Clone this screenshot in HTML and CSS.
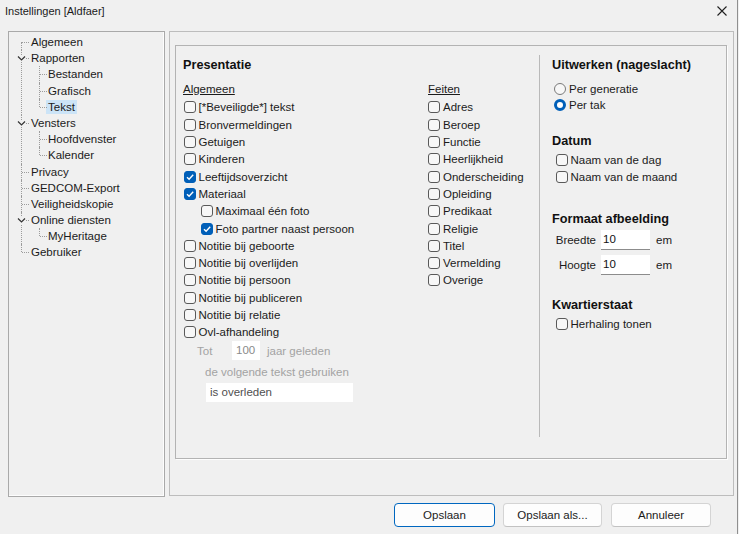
FILE: index.html
```html
<!DOCTYPE html>
<html lang="nl">
<head>
    <meta charset="UTF-8">
    <title>Instellingen [Aldfaer]</title>
    <link rel="stylesheet" href="styles.css">
</head>
<body>
<div class="window">
    <div class="titlebar">
        <span class="title">Instellingen [Aldfaer]</span>
        <svg class="close" width="10" height="10" viewBox="0 0 10 10">
            <path d="M0.5 0.5 L9.5 9.5 M9.5 0.5 L0.5 9.5" stroke="#1f1f1f" stroke-width="1.1" fill="none"/>
        </svg>
    </div>

    <div class="main">
        <!-- Boom met onderdelen -->
        <div class="tree-panel">
            <ul class="tree">
                <li><span class="node">Algemeen</span></li>
                <li>
                    <span class="node"><svg class="chevron" width="9" height="7" viewBox="0 0 9 7"><path d="M1 1.5 L4.5 5 L8 1.5" stroke="#333" stroke-width="1.2" fill="none"/></svg>Rapporten</span>
                    <ul>
                        <li><span class="node">Bestanden</span></li>
                        <li><span class="node">Grafisch</span></li>
                        <li><span class="node"><span class="selected">Tekst</span></span></li>
                    </ul>
                </li>
                <li>
                    <span class="node"><svg class="chevron" width="9" height="7" viewBox="0 0 9 7"><path d="M1 1.5 L4.5 5 L8 1.5" stroke="#333" stroke-width="1.2" fill="none"/></svg>Vensters</span>
                    <ul>
                        <li><span class="node">Hoofdvenster</span></li>
                        <li><span class="node">Kalender</span></li>
                    </ul>
                </li>
                <li><span class="node">Privacy</span></li>
                <li><span class="node">GEDCOM-Export</span></li>
                <li><span class="node">Veiligheidskopie</span></li>
                <li>
                    <span class="node"><svg class="chevron" width="9" height="7" viewBox="0 0 9 7"><path d="M1 1.5 L4.5 5 L8 1.5" stroke="#333" stroke-width="1.2" fill="none"/></svg>Online diensten</span>
                    <ul>
                        <li><span class="node">MyHeritage</span></li>
                    </ul>
                </li>
                <li><span class="node">Gebruiker</span></li>
            </ul>
        </div>

        <!-- Instellingen voor Tekst -->
        <div class="settings">
            <div class="group">
                <div class="section presentatie">
                    <h2>Presentatie</h2>
                    <div class="cols">
                        <div class="col col-algemeen">
                            <div class="col-title">Algemeen</div>
                            <div class="opt"><span class="box"></span>[*Beveiligde*] tekst</div>
                            <div class="opt"><span class="box"></span>Bronvermeldingen</div>
                            <div class="opt"><span class="box"></span>Getuigen</div>
                            <div class="opt"><span class="box"></span>Kinderen</div>
                            <div class="opt"><span class="box on"><svg width="10" height="10" viewBox="0 0 10 10"><path d="M2 5.2 L4.1 7.2 L8.2 2.8" stroke="#fff" stroke-width="1.4" fill="none"/></svg></span>Leeftijdsoverzicht</div>
                            <div class="opt"><span class="box on"><svg width="10" height="10" viewBox="0 0 10 10"><path d="M2 5.2 L4.1 7.2 L8.2 2.8" stroke="#fff" stroke-width="1.4" fill="none"/></svg></span>Materiaal</div>
                            <div class="opt sub"><span class="box"></span>Maximaal één foto</div>
                            <div class="opt sub"><span class="box on"><svg width="10" height="10" viewBox="0 0 10 10"><path d="M2 5.2 L4.1 7.2 L8.2 2.8" stroke="#fff" stroke-width="1.4" fill="none"/></svg></span>Foto partner naast persoon</div>
                            <div class="opt"><span class="box"></span>Notitie bij geboorte</div>
                            <div class="opt"><span class="box"></span>Notitie bij overlijden</div>
                            <div class="opt"><span class="box"></span>Notitie bij persoon</div>
                            <div class="opt"><span class="box"></span>Notitie bij publiceren</div>
                            <div class="opt"><span class="box"></span>Notitie bij relatie</div>
                            <div class="opt"><span class="box"></span>Ovl-afhandeling</div>
                            <div class="tot-row">
                                <span class="muted tot">Tot</span>
                                <span class="field years">100</span>
                                <span class="muted">jaar geleden</span>
                            </div>
                            <div class="muted volg">de volgende tekst gebruiken</div>
                            <div class="field overleden">is overleden</div>
                        </div>
                        <div class="col col-feiten">
                            <div class="col-title">Feiten</div>
                            <div class="opt"><span class="box"></span>Adres</div>
                            <div class="opt"><span class="box"></span>Beroep</div>
                            <div class="opt"><span class="box"></span>Functie</div>
                            <div class="opt"><span class="box"></span>Heerlijkheid</div>
                            <div class="opt"><span class="box"></span>Onderscheiding</div>
                            <div class="opt"><span class="box"></span>Opleiding</div>
                            <div class="opt"><span class="box"></span>Predikaat</div>
                            <div class="opt"><span class="box"></span>Religie</div>
                            <div class="opt"><span class="box"></span>Titel</div>
                            <div class="opt"><span class="box"></span>Vermelding</div>
                            <div class="opt"><span class="box"></span>Overige</div>
                        </div>
                    </div>
                </div>

                <div class="section side">
                    <h2>Uitwerken (nageslacht)</h2>
                    <div class="radios">
                        <div class="radio-row"><span class="radio"></span>Per generatie</div>
                        <div class="radio-row"><span class="radio on"></span>Per tak</div>
                    </div>

                    <h2 class="datum">Datum</h2>
                    <div class="checks">
                        <div class="opt"><span class="box"></span>Naam van de dag</div>
                        <div class="opt"><span class="box"></span>Naam van de maand</div>
                    </div>

                    <h2 class="formaat">Formaat afbeelding</h2>
                    <div class="size-row">
                        <span class="size-label">Breedte</span>
                        <span class="field size">10</span>
                        <span class="unit">em</span>
                    </div>
                    <div class="size-row">
                        <span class="size-label">Hoogte</span>
                        <span class="field size">10</span>
                        <span class="unit">em</span>
                    </div>

                    <h2 class="kwartier">Kwartierstaat</h2>
                    <div class="checks last">
                        <div class="opt"><span class="box"></span>Herhaling tonen</div>
                    </div>
                </div>
            </div>
        </div>
    </div>

    <div class="footer">
        <button class="btn default">Opslaan</button>
        <button class="btn als">Opslaan als...</button>
        <button class="btn annuleer">Annuleer</button>
    </div>
</div>
</body>
</html>
```

FILE: styles.css
```css
/* Algemeen */
html, body {
    margin: 0;
    padding: 0;
    background: #f0f0f0;
    overflow: hidden;
}

body {
    font-family: "Liberation Sans", Arial, sans-serif;
    font-size: 11.5px;
    color: #1b1b1b;
}

.window {
    width: 738px;
    height: 534px;
    box-sizing: border-box;
    border-right: 1px solid #8f8f8f;
    border-bottom-left-radius: 8px;
    background: #f0f0f0;
    display: flex;
    flex-direction: column;
}

/* Titelbalk */
.titlebar {
    height: 21px;
    flex: none;
    display: flex;
    align-items: center;
    justify-content: space-between;
    padding: 0 10px 0 5px;
    font-size: 11px;
    color: #1a1a1a;
}

.close {
    margin-top: 1px;
}

.main {
    display: flex;
    align-items: flex-start;
    gap: 4px;
    padding: 10px 0 0 8px;
    flex: none;
}

/* Boom */
.tree-panel {
    width: 157px;
    height: 466px;
    box-sizing: border-box;
    border: 1px solid #a9a9a9;
    box-shadow: inset -1px -1px 0 #fdfdfd;
    background: #f0f0f0;
}

.tree, .tree ul {
    list-style: none;
    margin: 0;
    padding: 0;
}

.tree {
    padding-top: 2px;
}

.tree li {
    position: relative;
}

.tree li::before {
    content: "";
    position: absolute;
    left: 12px;
    top: 0;
    bottom: 0;
    border-left: 1px dotted #9c9c9c;
}

.tree > li:first-child::before {
    top: 8px;
}

.tree li:last-child::before {
    bottom: auto;
    height: 8px;
}

.tree ul li::before {
    left: 30px;
}

.node {
    position: relative;
    display: block;
    height: 16.2px;
    line-height: 16.2px;
    padding-left: 22px;
    white-space: nowrap;
}

.node::after {
    content: "";
    position: absolute;
    left: 13px;
    top: 8px;
    width: 7px;
    border-top: 1px dotted #9c9c9c;
}

.tree ul .node {
    padding-left: 39px;
}

.tree ul .node::after {
    left: 31px;
}

.chevron {
    position: absolute;
    left: 8px;
    top: 5px;
    background: #f0f0f0;
    z-index: 1;
}

.selected {
    background: #cce4f7;
    padding: 1px 2px;
    margin-left: -2px;
}

/* Rechterpaneel */
.settings {
    width: 565px;
    height: 465px;
    box-sizing: border-box;
    border: 1px solid #bdbdbd;
    padding: 13px 6px 36px 5px;
}

.group {
    height: 100%;
    box-sizing: border-box;
    border: 1px solid #b3b3b3;
    box-shadow: 1px 1px 0 #fdfdfd;
    padding: 9px 0 21px 0;
    display: flex;
}

.section {
    padding-top: 2px;
}

.presentatie {
    width: 363px;
    box-sizing: border-box;
    padding-left: 7px;
}

.side {
    flex: 1;
    border-left: 1px solid #b9b9b9;
    padding-left: 12px;
}

h2 {
    margin: 0;
    font-size: 12.7px;
    line-height: 16px;
    font-weight: bold;
    color: #111;
}

.cols {
    display: flex;
}

.col-algemeen {
    width: 245px;
}

.col-title {
    margin: 7.5px 0 1px;
    height: 17.3px;
    line-height: 17.3px;
    text-decoration: underline;
}

/* Opties */
.opt {
    height: 17.3px;
    display: flex;
    align-items: center;
    white-space: nowrap;
}

.opt.sub {
    padding-left: 17px;
}

.box {
    width: 12px;
    height: 12px;
    box-sizing: border-box;
    border: 1px solid #595959;
    border-radius: 3px;
    background: #f7f7f7;
    margin: 0 2.5px 0 1px;
    display: flex;
    align-items: center;
    justify-content: center;
    flex: none;
}

.box.on {
    background: #005fb8;
    border-color: #005fb8;
}

.muted {
    color: #a3a3a3;
}

.field {
    background: #fff;
    box-sizing: border-box;
    display: inline-block;
}

.tot-row {
    display: flex;
    align-items: center;
    height: 19px;
    margin-top: 0.3px;
    padding-left: 14px;
}

.tot {
    width: 35px;
}

.field.years {
    width: 28px;
    height: 19px;
    line-height: 19px;
    padding-left: 4px;
    color: #8a8a8a;
    margin-right: 7px;
}

.volg {
    margin-top: 4px;
    padding-left: 22px;
    height: 17px;
    line-height: 17px;
}

.field.overleden {
    display: block;
    margin: 2px 0 0 23px;
    width: 147px;
    height: 19px;
    line-height: 19px;
    padding-left: 4px;
    color: #505050;
}

.col-feiten .opt .box {
    margin-left: 0;
    margin-right: 3px;
}

/* Rechterkolom */
.radios {
    margin-top: 8px;
}

.radio-row {
    height: 16px;
    display: flex;
    align-items: center;
}

.radio {
    width: 12px;
    height: 12px;
    box-sizing: border-box;
    border: 1px solid #7a7a7a;
    border-radius: 50%;
    background: #f7f7f7;
    margin: 0 3px 0 2px;
}

.radio.on {
    border: 3.5px solid #005fb8;
    background: #fff;
}

h2.datum {
    margin-top: 20px;
}

.checks {
    margin-top: 2.5px;
    padding-left: 3px;
}

h2.formaat {
    margin-top: 24.5px;
}

.size-row {
    display: flex;
    align-items: center;
    margin-top: 3px;
}

.size-row + .size-row {
    margin-top: 5px;
}

.size-label {
    width: 44px;
    text-align: right;
    margin-right: 5px;
}

.field.size {
    width: 49px;
    height: 20px;
    line-height: 19px;
    padding-left: 2px;
    border-bottom: 1px solid #8c8c8c;
    color: #111;
}

.unit {
    margin-left: 6px;
}

h2.kwartier {
    margin-top: 22px;
}

.checks.last {
    margin-top: 2.5px;
}

/* Knoppen */
.footer {
    display: flex;
    justify-content: flex-end;
    padding: 5.7px 26px 0 0;
}

.btn {
    font-family: "Liberation Sans", Arial, sans-serif;
    font-size: 11.5px;
    color: #1b1b1b;
    height: 24px;
    background: #fdfdfd;
    border: 1px solid #d4d4d4;
    border-bottom-color: #c2c2c2;
    border-radius: 4px;
    padding: 0;
}

.btn.default {
    width: 101px;
    border-color: #0067c0;
}

.btn.als {
    width: 99px;
    margin-left: 8px;
}

.btn.annuleer {
    width: 100px;
    margin-left: 9px;
}
```
